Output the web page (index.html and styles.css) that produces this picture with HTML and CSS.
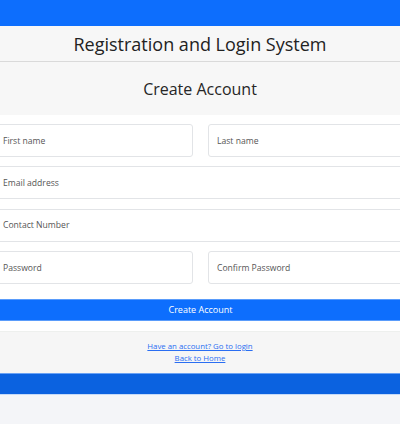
FILE: index.html
```html
<!DOCTYPE html>
<html>
<head>
<meta charset="utf-8">
<link rel="stylesheet" href="styles.css">
</head>
<body>
<div class="topbar"></div>
<header class="site-header"><h1 class="site-title">Registration and Login System</h1></header>
<main class="card">
  <div class="card-header"><h2 class="card-title">Create Account</h2></div>
  <div class="card-body">
    <form class="form">
      <div class="row two">
        <input class="field" type="text" placeholder="First name">
        <input class="field" type="text" placeholder="Last name">
      </div>
      <div class="row"><input class="field" type="email" placeholder="Email address"></div>
      <div class="row"><input class="field" type="text" placeholder="Contact Number"></div>
      <div class="row two">
        <input class="field" type="password" placeholder="Password">
        <input class="field" type="password" placeholder="Confirm Password">
      </div>
      <button class="btn" type="button">Create Account</button>
    </form>
  </div>
  <div class="card-footer">
    <a href="#" class="link">Have an account? Go to login</a>
    <a href="#" class="link">Back to Home</a>
  </div>
</main>
<footer class="bottombar"></footer>
</body>
</html>
```
FILE: styles.css
```css
html, body { margin: 0; padding: 0; }
body {
  background: #f4f5f8;
  font-family: "Open Sans", "Noto Sans", sans-serif;
  color: #212529;
  overflow: hidden;
  width: 400px;
}
.topbar { height: 26px; background: #0d6efd; }
.site-header {
  height: 35px;
  background: #f7f7f7;
  border-bottom: 1px solid #dadada;
  display: flex; align-items: center; justify-content: center;
}
.site-title { margin: 0; font-size: 18px; font-weight: 500; color: #222; }
.card { background: #fff; }
.card-header {
  height: 53px; background: #f7f7f7;
  display: flex; align-items: center; justify-content: center;
}
.card-title { margin: 0; font-size: 16px; font-weight: 500; color: #262626; }
.card-body { padding: 9px 0 10px; }
.form { width: 413px; margin-left: -6px; display: flex; flex-direction: column; }
.row { display: flex; gap: 15px; margin-bottom: 9.4px; }
.row.two .field { flex: 1; width: 0; }
.field {
  flex: 1; box-sizing: border-box; height: 33px;
  border: 1px solid #e2e4e7; border-radius: 3px; background: #fff;
  padding: 0 8px; font-family: inherit; font-size: 8.6px; color: #333;
}
.field::placeholder { color: #555; }
.btn {
  margin-top: 5px; height: 22px; border: 1px solid #5a9cfb; border-radius: 0;
  background: #0d6efd; color: #fff; font-family: inherit; font-size: 9px;
  width: 100%;
}
.card-footer {
  height: 42px; background: #f6f6f6; border-top: 1px solid #eef0ee;
  display: flex; flex-direction: column; align-items: center; justify-content: center;
  box-sizing: border-box;
}
.link { color: #2a6ef2; font-size: 7.8px; line-height: 12px; text-decoration: underline; }
.bottombar { height: 20px; background: #0b62e0; border-top: 1px solid #6aa2f5; border-bottom: 1px solid #c5daf8; }
```
